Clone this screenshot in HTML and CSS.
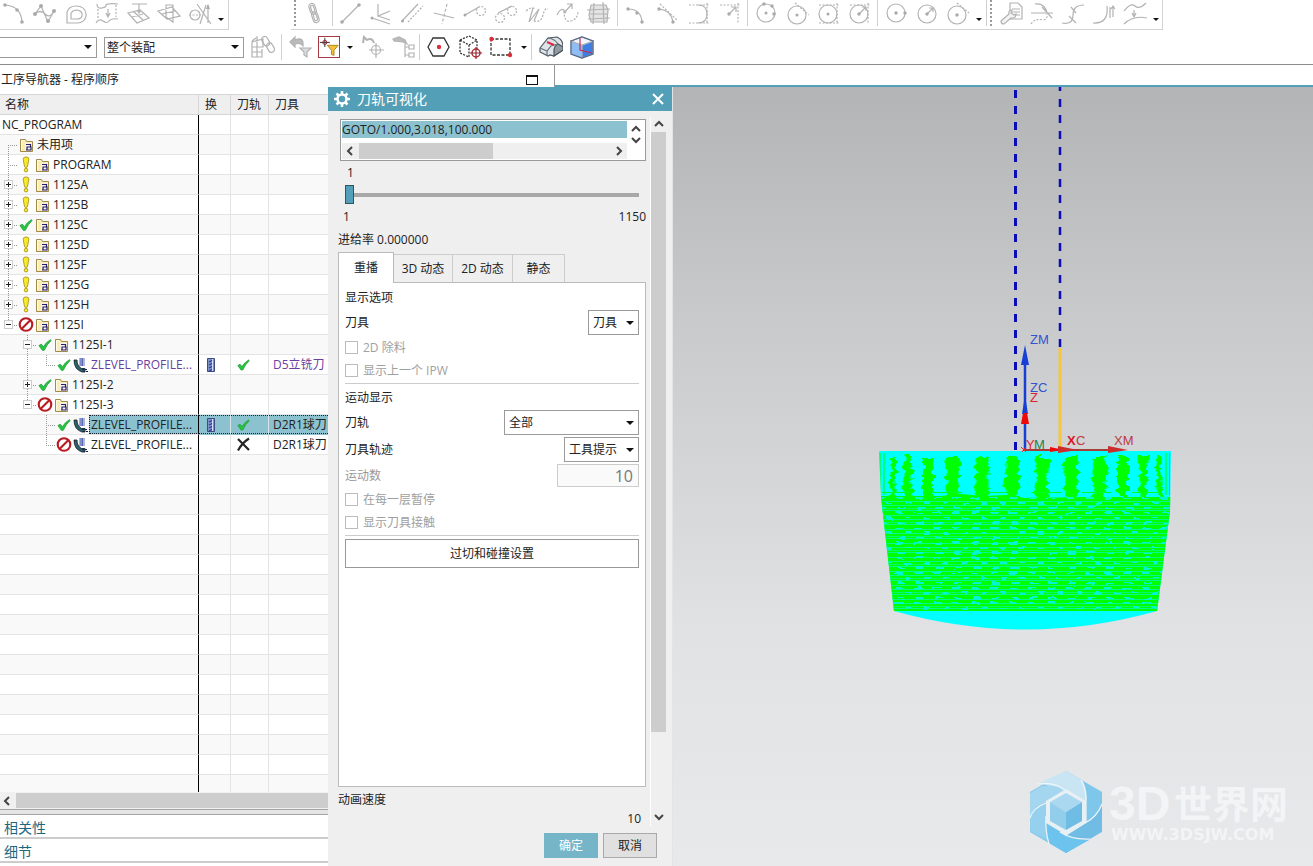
FILE: index.html
```html
<!DOCTYPE html>
<html lang="zh-CN">
<head>
<meta charset="utf-8">
<title>刀轨可视化</title>
<link rel="stylesheet" href="styles.css">
</head>
<body>
<svg class="defs" aria-hidden="true">
  <symbol id="folder" viewBox="0 0 15 15"><path d="M1.500 13.500V1.500h5l1 2h6v10z" fill="#f8eeb4" stroke="#a08b4c"/><path d="M2.500 12.500V2.500h3" stroke="#fffde8" fill="none"/><path d="M6 5h7v8H6z" fill="#f6f3e6"/><path d="M7 6.500h4.500v2.500H7.500M8 9v2.500M8 9h4v3H7" stroke="#26206f" stroke-width="1.200" fill="none"/></symbol>
  <symbol id="warn" viewBox="0 0 15 18"><path d="M4.500 3.500Q4.500 1 7.500 1t3 2.500L9 11.500Q7.500 13 6 11.500z" fill="#f8ea28" stroke="#ab9a27"/><circle cx="7.500" cy="15" r="1.900" fill="#f8ea28" stroke="#ab9a27"/></symbol>
  <symbol id="ok" viewBox="0 0 15 15"><path d="M1.800 8.500L4 7.200l2 2.300Q9 5 12.500 3l.8.700Q9.500 7 6.800 13H5z" fill="#25c53e" stroke="#1b9a34" stroke-width=".7"/></symbol>
  <symbol id="ban" viewBox="0 0 15 15"><circle cx="7.500" cy="7.500" r="5.900" fill="#fff" stroke="#b81c22" stroke-width="2"/><path d="M3.500 11.500l8-8" stroke="#b81c22" stroke-width="2"/></symbol>
  <symbol id="mill" viewBox="0 0 15 15"><path d="M6.500 0h5v8h-5z" fill="#5a68b0"/><path d="M8 0v8M10.500 0v8" stroke="#a9b5e6"/><path d="M1 2h3q0 6 4.500 8.500H12V14H9Q1 11.500 1 2z" fill="#2d6266" stroke="#111b2c" stroke-width=".8"/><path d="M9 11.500h6M10 13.500h5" stroke="#16204a" stroke-dasharray="2 1"/></symbol>
  <symbol id="tool" viewBox="0 0 8 14"><path d="M.5.500h7v13h-7z" fill="#7e93ce" stroke="#3d4a84"/><path d="M2 4l4-2M2 7l4-2M2 10l4-2M2 13l4-2" stroke="#2d3a7d" stroke-width="1.300"/><path d="M5.500 1v12" stroke="#d0dbf5"/></symbol>
  <symbol id="cross" viewBox="0 0 15 15"><path d="M2 2l11 11M13 1.500Q6 6 2 13.500" stroke="#252525" stroke-width="2.200" fill="none"/></symbol>
</svg>

<header class="toolbars">
  <div class="bar bar-top">
    <div class="group first">
      <button class="ic" aria-label="圆弧"><svg viewBox="0 0 24 24"><path d="M3 4Q19 5 20 21"/><g class="dot"><circle cx="3" cy="4" r="1.800"/><circle cx="15" cy="9" r="1.800"/><circle cx="20" cy="21" r="1.800"/></g></svg></button>
      <button class="ic" aria-label="样条"><svg viewBox="0 0 24 24"><path d="M2 13l6-8 7 16 6-11M2 13q5-5 10 0t9-3"/><g class="dot"><circle cx="2" cy="13" r="2"/><circle cx="8" cy="5" r="2"/><circle cx="15" cy="20" r="2"/><circle cx="21" cy="10" r="2"/></g></svg></button>
      <button class="ic" aria-label="偏置曲线"><svg viewBox="0 0 24 24"><path d="M3 22V11Q5 5 12 5q9 0 10 8v2q-1 6-8 7zM7 18v-6q2-3 6-3 6 1 5 6-1 3-5 3z"/></svg></button>
      <button class="ic" aria-label="桥接曲线"><svg viewBox="0 0 24 24"><path d="M2 3q0 5 5 4t4-3q2-2 12-1M1 22q3-5 7-2t6 0 9-2"/><path d="M3 8v9M21 4v12" class="dash"/><path d="M13 8v7m-2-3l2 4 2-4"/></svg></button>
      <button class="ic" aria-label="投影曲线"><svg viewBox="0 0 24 24"><path d="M2 12l12-3 9 8-12 5zM6 3h15M13 3v8m-2-2l2 3 2-3M6 16l11-3M8 11l9 8"/></svg></button>
      <button class="ic" aria-label="相交曲线"><svg viewBox="0 0 24 24"><path d="M1 10l14-4 8 9-13 3zM9 4h7v17l-7-5zM5 13l13-3M16 4v17"/></svg></button>
      <button class="ic" aria-label="截面曲线"><svg viewBox="0 0 24 24"><circle cx="7" cy="14" r="5"/><path d="M1 14h12" class="dash"/><path d="M9 3l14 20M20 22V4M12 23L18 4"/><path d="M18 8l2-5 2 5z" class="dot"/></svg></button>
      <button class="more" aria-label="更多曲线"></button>
    </div>
    <div class="group second">
      <i class="grip"></i>
      <button class="ic" aria-label="链接"><svg viewBox="0 0 24 24"><g transform="rotate(-18 12 12)"><rect x="9" y="2" width="6" height="11" rx="3"/><rect x="10.500" y="4" width="3" height="7" rx="1.500"/><rect x="9" y="11" width="6" height="11" rx="3"/><rect x="10.500" y="13" width="3" height="7" rx="1.500"/></g></svg></button>
      <i class="sep"></i>
      <button class="ic" aria-label="直线"><svg viewBox="0 0 24 24"><path d="M3 21L20 4"/><g class="dot"><circle cx="3" cy="21" r="1.800"/><circle cx="20" cy="4" r="1.800"/></g></svg></button>
      <button class="ic" aria-label="直线成角度"><svg viewBox="0 0 24 24"><path d="M8 3v12l12-5M2 17l18 6M8 15l12 4"/><circle cx="2" cy="17" r="1.500" class="dot"/></svg></button>
      <button class="ic" aria-label="平行线"><svg viewBox="0 0 24 24"><path d="M1 20L17 3"/><path d="M7 21L22 5" class="dash"/><circle cx="1.500" cy="20" r="1.500" class="dot"/></svg></button>
      <button class="ic" aria-label="垂直线"><svg viewBox="0 0 24 24"><path d="M2 12l20 5"/><path d="M15 3l-5 20" class="dash2"/></svg></button>
      <button class="ic" aria-label="相切线"><svg viewBox="0 0 24 24"><path d="M2 14l14-8"/><circle cx="18" cy="10" r="4.500" class="dash"/><circle cx="2" cy="14" r="1.500" class="dot"/></svg></button>
      <button class="ic" aria-label="双相切线"><svg viewBox="0 0 24 24"><path d="M4 12l14-7"/><circle cx="6" cy="17" r="4.500" class="dash"/><circle cx="18" cy="10" r="4.500" class="dash"/></svg></button>
      <button class="ic" aria-label="曲线连接"><svg viewBox="0 0 24 24"><path d="M4 21l4-14M9 20l5-12M4 21l10-13"/><path d="M1 10q6-5 9-2M9 20q7 2 9-6t5-6" class="dash"/></svg></button>
      <button class="ic" aria-label="艺术样条"><svg viewBox="0 0 24 24"><path d="M1 14q5-10 9-2M8 12l8-9m-5 0h5v5"/><path d="M8 10q0 12 7 10t7-10" class="dash"/></svg></button>
      <button class="ic" aria-label="曲线网格"><svg viewBox="0 0 24 24"><path d="M4 4h15l2 5-1 12H4L2 14z" fill="#e4e4e4"/><path d="M7 2l-1 21M16 1l1 22M0 9l23-1M1 18l22-1M3 13h18"/></svg></button>
      <i class="sep"></i>
      <button class="ic" aria-label="三点圆弧"><svg viewBox="0 0 24 24"><path d="M4 8q13 0 14 13"/><g class="dot"><circle cx="4" cy="8" r="1.700"/><circle cx="13" cy="12" r="1.700"/><circle cx="18" cy="21" r="1.700"/></g></svg></button>
      <button class="ic" aria-label="相切圆弧"><svg viewBox="0 0 24 24"><path d="M4 8q12 1 14 13"/><path d="M5 3l17 16" class="dash"/><g class="dot"><circle cx="4" cy="8" r="1.700"/><circle cx="18" cy="21" r="1.700"/></g></svg></button>
      <button class="ic" aria-label="倒圆角"><svg viewBox="0 0 24 24"><path d="M12 4q9 0 9 9t-9 9"/><path d="M3 4h20M3 22h20M21 2v21" class="dash"/></svg></button>
      <button class="ic" aria-label="半径圆弧"><svg viewBox="0 0 24 24"><path d="M12 13l7-7m-5 0h5v5"/><path d="M3 4h20M21 2v21" class="dash"/><circle cx="12" cy="13" r="1.700" class="dot"/></svg></button>
      <i class="sep"></i>
      <button class="ic" aria-label="三点圆"><svg viewBox="0 0 24 24"><circle cx="12" cy="12" r="9"/><g class="dot"><circle cx="12" cy="12" r="1.500"/><circle cx="20" cy="13" r="1.700"/><circle cx="10" cy="3" r="1.700"/><circle cx="18" cy="5" r="1.700"/></g></svg></button>
      <button class="ic" aria-label="相切圆"><svg viewBox="0 0 24 24"><circle cx="12" cy="14" r="9"/><path d="M10 2l14 12" class="dash"/><circle cx="12" cy="14" r="1.500" class="dot"/></svg></button>
      <button class="ic" aria-label="边界圆"><svg viewBox="0 0 24 24"><circle cx="12" cy="13" r="9"/><path d="M3 4h20M3 22h20M21 2v21" class="dash"/><circle cx="12" cy="13" r="1.500" class="dot"/></svg></button>
      <button class="ic" aria-label="边界半径圆"><svg viewBox="0 0 24 24"><circle cx="12" cy="13" r="9"/><path d="M12 13l7-7m-4 0h4v4"/><path d="M3 4h20M21 2v21" class="dash"/><circle cx="12" cy="13" r="1.700" class="dot"/></svg></button>
      <i class="sep"></i>
      <button class="ic" aria-label="中心圆"><svg viewBox="0 0 24 24"><circle cx="12" cy="12" r="9"/><g class="dot"><circle cx="12" cy="12" r="1.700"/><circle cx="21" cy="12" r="1.700"/></g></svg></button>
      <button class="ic" aria-label="半径圆"><svg viewBox="0 0 24 24"><circle cx="12" cy="13" r="9"/><path d="M12 13l6-6m-4 0h4v4"/><circle cx="12" cy="13" r="1.700" class="dot"/></svg></button>
      <button class="ic" aria-label="中心相切圆"><svg viewBox="0 0 24 24"><circle cx="11" cy="14" r="9"/><path d="M11 2l12 10" class="dash"/><circle cx="11" cy="14" r="1.700" class="dot"/></svg></button>
      <button class="more" aria-label="更多圆"></button>
      <i class="grip end"></i>
      <button class="ic" aria-label="编辑参数"><svg viewBox="0 0 24 24"><path d="M11 2h8l4 4v12H11zM13 8h8M13 11h8M13 14h8"/><path d="M2 20l8-7q-1-4 3-4l-1 3 3 2 2-1q0 5-5 4l-7 6q-3 0-3-3z" fill="#f4f4f4"/></svg></button>
      <button class="ic" aria-label="修剪曲线"><svg viewBox="0 0 24 24"><path d="M1 12h22M5 3q10-1 12 9M12 6l10 11"/><path d="M1 23q4-6 12-4 5-1 4-6" class="dash"/></svg></button>
      <button class="ic" aria-label="修剪拐角"><svg viewBox="0 0 24 24"><path d="M1 22q11 2 11-8T23 4M10 6l5 6M8 15l7 7"/></svg></button>
      <button class="ic" aria-label="曲线长度"><svg viewBox="0 0 24 24"><path d="M1 22q16 1 14-17M18 6v11M21 5v11m-2-8l2-3 2 3"/></svg></button>
      <button class="ic" aria-label="光顺曲线"><svg viewBox="0 0 24 24"><path d="M1 10q7-9 11-5t11-3M1 23q9-9 23-6M11 9v6m-2-3l2 4 2-4"/></svg></button>
      <button class="more" aria-label="更多编辑"></button>
    </div>
  </div>
  <div class="bar bar-bottom">
    <span class="pick filter"><select aria-label="类型过滤器"><option></option></select></span>
    <span class="pick scope"><select aria-label="选择范围"><option>整个装配</option></select></span>
    <button class="ic wide" aria-label="装配链接"><svg viewBox="0 0 24 24"><path d="M1 7l11-3v8H1zM1 12v10h10v-8M6 1v21M1 17h10M1 6l4-3"/><g transform="rotate(-30 18 10)"><rect x="14" y="0" width="6" height="10" rx="3"/><rect x="15" y="8" width="6" height="10" rx="3"/></g></svg></button>
    <i class="sep"></i>
    <button class="ic" aria-label="重置过滤器"><svg viewBox="0 0 24 24"><path d="M1 7l5-5v3q9-4 8 6-3-4-8-2v3z" fill="#bbb"/><path d="M11 13h11l-4 4v5l-3-2v-3z" fill="#ddd"/></svg></button>
    <button class="ic boxed" aria-label="常规选择过滤器"><svg viewBox="0 0 24 24"><path d="M7 1v11M1 6.500h12" stroke="#333"/><circle cx="7" cy="6.500" r="2.500" stroke="#a12a38"/><path d="M10 10h13l-5 6v6l-3-1v-5z" fill="#f0c23c" stroke="#b68a1d"/></svg></button>
    <button class="more" aria-label="过滤器选项"></button>
    <button class="ic" aria-label="捕捉点"><svg viewBox="0 0 24 24"><path d="M2 8l1-6 3 3q5-3 7 3" stroke-width="2"/><circle cx="15" cy="15" r="4.500"/><path d="M15 8v15M8 15h15"/></svg></button>
    <button class="ic" aria-label="选择父项"><svg viewBox="0 0 24 24"><path d="M1 4l6-2 6 3 2 4-4-2-9-1z" fill="#bbb"/><path d="M13 9v13M13 12h4M13 20h4M17 10h5v4h-5zM17 18h5v4h-5z"/></svg></button>
    <i class="sep"></i>
    <button class="ic" aria-label="点"><svg viewBox="0 0 24 24"><path d="M1 12L6 3h11l5 9-5 9H6z" stroke="#333" stroke-width="1.300"/><circle cx="12" cy="12" r="2.200" fill="#d7303a" stroke="none"/></svg></button>
    <button class="ic" aria-label="旋转点"><svg viewBox="0 0 24 24"><path d="M2 5l9-4 8 4v9M2 5v13l9 4V10L2 5M11 10l8-5" stroke="#333" stroke-width="1.300" stroke-dasharray="2 1.300"/><circle cx="18" cy="18" r="4" stroke="#b02d35" stroke-width="1.500"/><path d="M18 12v12M12 18h12" stroke="#8f2c31"/></svg></button>
    <button class="ic" aria-label="矩形选择"><svg viewBox="0 0 24 24"><path d="M2 4h19v16H2z" stroke="#333" stroke-width="1.300" stroke-dasharray="3 1.500"/><circle cx="2.500" cy="4" r="2.200" fill="#d7303a" stroke="none"/><circle cx="21" cy="20" r="2.200" fill="#d7303a" stroke="none"/></svg></button>
    <button class="more" aria-label="选择方式"></button>
    <i class="sep"></i>
    <button class="ic" aria-label="着色"><svg viewBox="0 0 24 24"><path d="M1 13L9 3l9-1q6 3 6 9v4l-9 6-4-1-2 1-8-4z" fill="#dfe4e8" stroke="#4d575e"/><path d="M15 21v-5q0-5 4-7l5 3v3z" fill="#8f9aa1" stroke="#4d575e"/><path d="M1 13l7 3 4-5 7-2M8 16v5M9 3q7 1 10 6" stroke="#66737c"/><path d="M8 7l7 3" stroke="#e22b42" stroke-width="2"/></svg></button>
    <button class="ic" aria-label="剖切视图"><svg viewBox="0 0 24 24"><path d="M1 6l11 4v13L1 19z" fill="#8fbdf6"/><path d="M12 10l11-4v13l-11 4z" fill="#3d7fe4"/><path d="M1 6l11-4 11 4-11 4z" fill="#f2f7ff"/><path d="M1 6l11-4 11 4v13l-11 4L1 19z" stroke="#53688c"/><path d="M10 3v12l12 3" stroke="#c62e55"/></svg></button>
  </div>
</header>

<main class="work">
  <aside class="nav">
    <h1 class="nav-title">工序导航器 - 程序顺序<button class="dock" aria-label="停靠"></button></h1>
    <div class="tree-scroll">
      <table class="tree">
        <colgroup><col class="c-name"><col class="c-change"><col class="c-path"><col></colgroup>
        <thead><tr><th>名称</th><th>换</th><th>刀轨</th><th>刀具</th></tr></thead>
        <tbody>
          <tr><td><div class="node root"><span>NC_PROGRAM</span></div></td><td></td><td></td><td></td></tr>
          <tr><td><div class="node"><i class="slot down"></i><svg class="fo"><use href="#folder"/></svg><span>未用项</span></div></td><td></td><td></td><td></td></tr>
          <tr><td><div class="node"><i class="slot mid"></i><svg class="st"><use href="#warn"/></svg><svg class="fo"><use href="#folder"/></svg><span>PROGRAM</span></div></td><td></td><td></td><td></td></tr>
          <tr><td><div class="node"><i class="slot mid"><button class="exp plus" aria-label="展开"></button></i><svg class="st"><use href="#warn"/></svg><svg class="fo"><use href="#folder"/></svg><span>1125A</span></div></td><td></td><td></td><td></td></tr>
          <tr><td><div class="node"><i class="slot mid"><button class="exp plus" aria-label="展开"></button></i><svg class="st"><use href="#warn"/></svg><svg class="fo"><use href="#folder"/></svg><span>1125B</span></div></td><td></td><td></td><td></td></tr>
          <tr><td><div class="node"><i class="slot mid"><button class="exp plus" aria-label="展开"></button></i><svg class="st"><use href="#ok"/></svg><svg class="fo"><use href="#folder"/></svg><span>1125C</span></div></td><td></td><td></td><td></td></tr>
          <tr><td><div class="node"><i class="slot mid"><button class="exp plus" aria-label="展开"></button></i><svg class="st"><use href="#warn"/></svg><svg class="fo"><use href="#folder"/></svg><span>1125D</span></div></td><td></td><td></td><td></td></tr>
          <tr><td><div class="node"><i class="slot mid"><button class="exp plus" aria-label="展开"></button></i><svg class="st"><use href="#warn"/></svg><svg class="fo"><use href="#folder"/></svg><span>1125F</span></div></td><td></td><td></td><td></td></tr>
          <tr><td><div class="node"><i class="slot mid"><button class="exp plus" aria-label="展开"></button></i><svg class="st"><use href="#warn"/></svg><svg class="fo"><use href="#folder"/></svg><span>1125G</span></div></td><td></td><td></td><td></td></tr>
          <tr><td><div class="node"><i class="slot mid"><button class="exp plus" aria-label="展开"></button></i><svg class="st"><use href="#warn"/></svg><svg class="fo"><use href="#folder"/></svg><span>1125H</span></div></td><td></td><td></td><td></td></tr>
          <tr><td><div class="node"><i class="slot last"><button class="exp" aria-label="折叠"></button></i><svg class="st"><use href="#ban"/></svg><svg class="fo"><use href="#folder"/></svg><span>1125I</span></div></td><td></td><td></td><td></td></tr>
          <tr><td><div class="node l2"><i class="slot mid"><button class="exp" aria-label="折叠"></button></i><svg class="st"><use href="#ok"/></svg><svg class="fo"><use href="#folder"/></svg><span>1125I-1</span></div></td><td></td><td></td><td></td></tr>
          <tr class="op"><td><div class="node l2"><i class="slot through"></i><i class="slot last"></i><svg class="st"><use href="#ok"/></svg><svg class="fo"><use href="#mill"/></svg><span>ZLEVEL_PROFILE...</span></div></td><td><svg class="tl"><use href="#tool"/></svg></td><td><svg class="mk"><use href="#ok"/></svg></td><td>D5立铣刀</td></tr>
          <tr><td><div class="node l2"><i class="slot mid"><button class="exp plus" aria-label="展开"></button></i><svg class="st"><use href="#ok"/></svg><svg class="fo"><use href="#folder"/></svg><span>1125I-2</span></div></td><td></td><td></td><td></td></tr>
          <tr><td><div class="node l2"><i class="slot last"><button class="exp" aria-label="折叠"></button></i><svg class="st"><use href="#ban"/></svg><svg class="fo"><use href="#folder"/></svg><span>1125I-3</span></div></td><td></td><td></td><td></td></tr>
          <tr class="picked"><td><div class="node l3"><i class="slot mid"></i><svg class="st"><use href="#ok"/></svg><svg class="fo"><use href="#mill"/></svg><span>ZLEVEL_PROFILE...</span></div></td><td><svg class="tl"><use href="#tool"/></svg></td><td><svg class="mk"><use href="#ok"/></svg></td><td>D2R1球刀</td></tr>
          <tr><td><div class="node l3"><i class="slot last"></i><svg class="st"><use href="#ban"/></svg><svg class="fo"><use href="#mill"/></svg><span>ZLEVEL_PROFILE...</span></div></td><td></td><td><svg class="mk"><use href="#cross"/></svg></td><td>D2R1球刀</td></tr>
          <tr><td></td><td></td><td></td><td></td></tr><tr><td></td><td></td><td></td><td></td></tr>
          <tr><td></td><td></td><td></td><td></td></tr><tr><td></td><td></td><td></td><td></td></tr>
          <tr><td></td><td></td><td></td><td></td></tr><tr><td></td><td></td><td></td><td></td></tr>
          <tr><td></td><td></td><td></td><td></td></tr><tr><td></td><td></td><td></td><td></td></tr>
          <tr><td></td><td></td><td></td><td></td></tr><tr><td></td><td></td><td></td><td></td></tr>
          <tr><td></td><td></td><td></td><td></td></tr><tr><td></td><td></td><td></td><td></td></tr>
          <tr><td></td><td></td><td></td><td></td></tr><tr><td></td><td></td><td></td><td></td></tr>
          <tr><td></td><td></td><td></td><td></td></tr><tr><td></td><td></td><td></td><td></td></tr>
          <tr><td></td><td></td><td></td><td></td></tr>
        </tbody>
      </table>
    </div>
    <div class="hbar"><svg class="chev" viewBox="0 0 10 10"><path d="M7 1L3 5l4 4"/></svg><i class="thumb"></i></div>
    <div class="splitter"></div>
    <button class="fold">相关性</button>
    <button class="fold">细节</button>
  </aside>

  <section class="view">
    <svg class="scene" viewBox="555 87 758 779" preserveAspectRatio="xMaxYMin meet" role="img" aria-label="零件与刀轨">
      <defs>
        <filter id="rough" x="-5%" y="-5%" width="110%" height="110%"><feTurbulence type="fractalNoise" baseFrequency="0.09 0.2" numOctaves="2" seed="4"/><feDisplacementMap in="SourceGraphic" scale="11" xChannelSelector="R" yChannelSelector="A"/></filter>
        <filter id="weave" x="0" y="0" width="100%" height="100%"><feTurbulence type="fractalNoise" baseFrequency="0.07 0.3" numOctaves="2" seed="9"/><feDisplacementMap in="SourceGraphic" scale="5" xChannelSelector="R" yChannelSelector="A"/></filter>
        <pattern id="lines" width="40" height="14" patternUnits="userSpaceOnUse"><path d="M0 1.500h40M0 6.500h40M0 11.500h40" stroke="#00fb8c"/><path d="M0 4.500h40" stroke="#00f8b4" stroke-width=".6"/></pattern>
        <pattern id="dashes" width="19" height="15" patternUnits="userSpaceOnUse"><path d="M2 3h8M12 8h6M4 13h8" stroke="#00f5d0" stroke-width="1.800"/></pattern>
        <clipPath id="body"><path d="M879 451h292l-1 60-13 100-263 0-13-114z"/></clipPath>
      </defs>
      <g stroke="#0b0bb8" fill="none" stroke-dasharray="8 8"><path d="M1015.500 90v361" stroke-width="3"/><path d="M1060 83v265" stroke-width="2.500"/></g>
      <path d="M1060 348v102" stroke="#f7c63c" stroke-width="3"/>
      <path d="M879 451h292l-1 60-13 100Q1026 648 894 611l-13-114z" fill="#00ffff"/>
      <g clip-path="url(#body)">
        <path d="M880 453v42M884 453v42M1166 453v42M1169.500 453v42" stroke="#00ff00"/>
        <g filter="url(#rough)" stroke="#00ff00" fill="none"><path d="M893 456v42M1159 456v42" stroke-width="5"/><path d="M908 456v42M1143 456v42" stroke-width="7"/><path d="M928 456v42M1123 456v42" stroke-width="10"/><path d="M953 456v42M982 456v42M1012 456v42M1042 456v42M1071 456v42M1099 456v42" stroke-width="13"/></g>
        <path d="M879 496h62l20-2 22 2 22-1 20 3 60-1h86v114H879z" fill="#00ff00"/>
        <path d="M879 500h292v111H879z" fill="url(#lines)"/>
        <g filter="url(#weave)"><path d="M875 497h300v113H875z" fill="url(#dashes)"/></g>
        <path d="M882 492.500h285" stroke="#00ff20" stroke-dasharray="29 21"/>
      </g>
      <g fill="none"><path d="M1025 450v-86" stroke="#173fd6" stroke-width="2.500"/><path d="M1023 450h88" stroke="#a83e36" stroke-width="2"/></g>
      <path d="M1025 345l4 20h-8zM1025 395l3 19h-6z" fill="#173fd6"/>
      <path d="M1023 413h4l2 11h-8zM1050 447l14 3-14 2z" fill="#ed0909"/>
      <path d="M1108 446l20 4-20 3zM1058 446l20 4-20 3z" fill="#c92d2d"/>
      <path d="M1021 447l5 5M1026 447l-4 5" stroke="#e22"/>
      <g class="axis"><text x="1030" y="344" fill="#3255cf">ZM</text><text x="1030" y="392" fill="#3255cf">ZC</text><text x="1030" y="402" fill="#df2032">Z</text><text x="1026" y="449" fill="#e12737">Y</text><text x="1034" y="449" fill="#22834c">M</text><text x="1067" y="445" fill="#df1625" class="strong">X</text><text x="1076" y="445" fill="#be3a42">C</text><text x="1114" y="445" fill="#be3a42">XM</text></g>
      <g class="brand">
        <path d="M1066 771l36 21v40l-36 21-36-21v-40z" fill="#7ec7eb"/>
        <path d="M1066 771l17 10q5 10 3 22l-20-12-20-6-9-1z" fill="#c9e4f2"/>
        <path d="M1030 793l12-7q13-2 24 5l-20 12q-14 8-16 16z" fill="#a5d6f0"/>
        <path d="M1030 818q4-10 17-15v20q0 13 5 20l-22-12z" fill="#96d0ef"/>
        <path d="M1066 853l-17-10q-3-11-3-20l20 12 20 4 3 1z" fill="#6cc3ed"/>
        <path d="M1102 806v25l-14 9q-12 0-22-5l20-12q12-6 16-17z" fill="#70bce4"/>
        <path d="M1037 784q18-3 29 7M1081 780q6 11 5 25v18M1102 804q-5 13-17 19l-19 12M1090 839q-18 1-30-7M1049 844q-4-14-3-28M1030 818q3-10 16-15l20-12" fill="none" stroke="#eef5f8" stroke-width="1.200"/>
        <path d="M1066 789l20 12v22l-20 12-20-12v-22z" fill="#e8f0f4"/><path d="M1066 793l16 9-16 10-16-10z" fill="#a9d8f0"/><path d="M1050 802l16 10v18l-16-9z" fill="#92cdec"/><path d="M1082 802l-16 10v18l16-9z" fill="#6fbce5"/>
        <text x="1109" y="820" class="brand-lat">3D</text><text x="1174" y="818" class="brand-cjk">世界网</text><text x="1111" y="840" class="brand-url">WWW.3DSJW.COM</text>
      </g>
    </svg>
  </section>

  <form class="dialog" role="dialog" aria-label="刀轨可视化">
    <header class="caption">
      <svg class="gear" viewBox="0 0 16 16"><circle cx="8" cy="8" r="4.500" fill="none" stroke="#fff" stroke-width="2.500"/><path d="M8 0v3M8 13v3M0 8h3M13 8h3M2.500 2.500l2 2M11.500 11.500l2 2M2.500 13.500l2-2M11.500 4.500l2-2" stroke="#fff" stroke-width="2.500"/></svg>
      <h2>刀轨可视化</h2>
      <button type="button" class="close" aria-label="关闭"><svg viewBox="0 0 12 12"><path d="M1 1l10 10M11 1L1 11" stroke="#fff" stroke-width="2"/></svg></button>
    </header>
    <div class="dialog-body">
      <div class="content">
        <div class="listbox">
          <div class="list-main"><div class="line">GOTO/1.000,3.018,100.000</div><div class="list-h"><svg class="chev" viewBox="0 0 10 10"><path d="M7 1L3 5l4 4"/></svg><i></i><svg class="chev" viewBox="0 0 10 10"><path d="M3 1l4 4-4 4"/></svg></div></div>
          <div class="list-v"><svg class="chev" viewBox="0 0 10 10"><path d="M1 7l4-4 4 4"/></svg><svg class="chev" viewBox="0 0 10 10"><path d="M1 3l4 4 4-4"/></svg></div>
        </div>
        <label class="now" for="step">1</label>
        <input id="step" class="range" type="range" min="1" max="1150" value="1">
        <div class="ends"><span>1</span><span>1150</span></div>
        <div class="feed">进给率 0.000000</div>
        <div class="tabs" role="tablist"><button type="button" role="tab" class="on">重播</button><button type="button" role="tab">3D 动态</button><button type="button" role="tab">2D 动态</button><button type="button" role="tab">静态</button></div>
        <div class="panel">
          <h3>显示选项</h3>
          <div class="row"><label for="tool-sel">刀具</label><span class="pick"><select id="tool-sel"><option>刀具</option></select></span></div>
          <div class="checks"><label><input type="checkbox" disabled>2D 除料</label><label><input type="checkbox" disabled>显示上一个 IPW</label></div>
          <hr>
          <h3>运动显示</h3>
          <div class="row"><label for="path-sel">刀轨</label><span class="pick long"><select id="path-sel"><option>全部</option></select></span></div>
          <div class="row"><label for="trace-sel">刀具轨迹</label><span class="pick mid"><select id="trace-sel"><option>工具提示</option></select></span></div>
          <div class="row off"><label for="count">运动数</label><input id="count" type="text" value="10" disabled></div>
          <div class="checks"><label><input type="checkbox" disabled>在每一层暂停</label><label><input type="checkbox" disabled>显示刀具接触</label></div>
          <hr>
          <button type="button" class="settings">过切和碰撞设置</button>
        </div>
        <div class="speed">动画速度</div>
        <div class="speed-max">10</div>
      </div>
      <div class="vbar"><svg class="chev" viewBox="0 0 10 10"><path d="M1 7l4-4 4 4"/></svg><i></i><svg class="chev" viewBox="0 0 10 10"><path d="M1 3l4 4 4-4"/></svg></div>
    </div>
    <footer class="actions"><button type="button" class="primary">确定</button><button type="button">取消</button></footer>
  </form>
</main>
</body>
</html>
```

FILE: styles.css
```css
* { box-sizing: border-box; }
body {
  margin: 0;
  height: 100vh;
  display: flex;
  flex-direction: column;
  overflow: hidden;
  background: #fff;
  color: #222;
  font: 12px/16px "Open Sans", "Noto Sans CJK SC", sans-serif;
}
button, select, input { font: inherit; color: inherit; border-radius: 0; }
button { padding: 0; border: 0; background: none; }
h1, h2, h3 { margin: 0; font-size: 12px; font-weight: 400; }
.defs { position: absolute; width: 0; height: 0; }

/* toolbars */
.toolbars { flex: none; border-bottom: 1px solid #8d8d8d; }
.bar { display: flex; align-items: center; }
.bar-top { height: 30px; gap: 62px; }
.group { display: flex; align-items: center; height: 30px; padding-bottom: 4px; border: solid #d4d4d4; border-width: 0 1px 1px 0; }
.group.first { width: 229px; }
.group.first .ic:first-child { margin-left: -2px; }
.bar-bottom { height: 34px; }
.ic { flex: none; display: grid; place-items: center; width: 31px; height: 26px; }
.ic svg { width: 24px; height: 24px; fill: none; stroke: #b2b2b2; stroke-width: 1.2; }
.ic .dot { fill: #aaa; stroke: none; }
.ic .dash { stroke-dasharray: 2 1.5; }
.ic .dash2 { stroke-dasharray: 3 2; }
.ic.wide { width: 37px; }
.ic.boxed { width: 22px; height: 22px; margin: 0 2px; border: 1px solid #a83843; }
.ic.boxed svg { width: 20px; height: 20px; }
.more { flex: none; width: 12px; height: 24px; display: grid; place-items: center; }
.more::after { content: ""; border: 3px solid transparent; border-top-color: #111; border-bottom: 0; }
.bar-top .more { padding-top: 14px; }
.bar-bottom .more { width: 15px; }
.sep { flex: none; width: 1px; height: 26px; margin: 0 2px 0 3px; background: #d0d0d0; }
.bar-bottom .sep { margin: 0 3px 0 0; }
.grip { flex: none; width: 7px; height: 26px; background: repeating-linear-gradient(#999 0 2px, #fff 2px 4px) 3px 0 / 2px 100% no-repeat; }
.grip.end { width: 9px; margin-left: 1px; border-left: 1px solid #d0d0d0; }
.pick { position: relative; display: block; }
.pick select { display: block; width: 100%; height: 25px; padding: 0 4px; border: 1px solid #9a9a9a; background: #fff; appearance: none; outline: 0; }
.pick::after { content: ""; position: absolute; right: 5px; top: 50%; margin-top: -2px; border: 4px solid transparent; border-top-color: #111; border-bottom: 0; pointer-events: none; }
.bar .pick select { height: 21px; padding: 1px 2px 0; }
.filter { width: 98px; margin-left: -1px; }
.scope { width: 140px; margin-left: 7px; }

/* navigator */
.work { flex: 1; min-height: 0; display: flex; position: relative; }
.nav { flex: none; width: 555px; display: flex; flex-direction: column; border-right: 1px solid #999; }
.nav-title { flex: none; display: flex; align-items: center; justify-content: space-between; height: 29px; padding: 0 16px 0 1px; }
.dock { width: 12px; height: 10px; border: 1px solid #111; border-top-width: 2px; }
.tree-scroll { flex: 1; min-height: 0; overflow: hidden; }
.tree { width: 100%; table-layout: fixed; border-collapse: separate; border-spacing: 0; }
.c-name { width: 199px; }
.c-change { width: 32px; }
.c-path { width: 38px; }
.tree th { height: 21px; padding: 0 6px; font-weight: 400; text-align: left; background: #efefef; border: solid #d6d6d6; border-width: 1px 1px 1px 0; }
.tree th:first-child { padding-left: 5px; }
.tree td { height: 20px; padding: 0 4px; border: solid #e4e4e4; border-width: 0 1px 1px 0; white-space: nowrap; }
.tree td:first-child { padding: 0; border-right-color: #000; }
.tree td:nth-child(2), .tree td:nth-child(3) { padding: 0 8px; }
.tree tbody tr:nth-child(even) { background: #f9f9f9; }
.tree .op { color: #6a3fa0; }
.tree svg { display: block; flex: none; }
.tl { width: 8px; height: 14px; }
.mk { width: 15px; height: 15px; margin-left: -3px; }
.node { display: flex; align-items: center; height: 19px; }
.node.l2 { padding-left: 19px; }
.node.l3 { padding-left: 38px; }
.node span { flex: 1; height: 19px; line-height: 20px; padding-left: 2px; }
.st { width: 16px; height: 17px; }
.fo { width: 15px; height: 15px; margin: 2px 1px 0; }
.slot { flex: none; display: flex; align-items: center; width: 18px; height: 20px; padding-left: 4px; background-repeat: no-repeat;
  background-image: repeating-linear-gradient(#999 0 1px, transparent 1px 2px), repeating-linear-gradient(90deg, #999 0 1px, transparent 1px 2px);
  background-position: 8px 0, 8px 10px; background-size: 1px 100%, 9px 1px; }
.slot.last { background-size: 1px 11px, 9px 1px; }
.slot.down { background-position: 8px 10px, 8px 10px; }
.slot.through { width: 19px; background-size: 1px 100%, 0 0; }
.exp { width: 9px; height: 9px; border: 1px solid #ccc; background: linear-gradient(#222, #222) center / 5px 1px no-repeat #fff; }
.exp.plus { background: linear-gradient(#222, #222) center / 5px 1px no-repeat, linear-gradient(#222, #222) center / 1px 5px no-repeat, #fff; }
.picked td:not(:first-child), .picked .node span {
  background: repeating-linear-gradient(90deg, #123 0 1px, transparent 1px 2px) 0 0 / 100% 1px no-repeat,
    repeating-linear-gradient(90deg, #123 0 1px, transparent 1px 2px) 0 100% / 100% 1px no-repeat, #8cc2d0; }
.picked .node span { border-left: 1px dotted #123; padding-left: 1px; }
.picked td:nth-child(2), .picked td:nth-child(3) { border-right-color: #d8e6ea; }
.picked td:not(:first-child) { border-bottom-color: transparent; }
.hbar { flex: none; display: flex; align-items: center; gap: 4px; height: 17px; padding: 1px 0 1px 2px; background: #f0f0f0; }
.thumb { flex: 1; height: 15px; background: #cdcdcd; }
.chev { flex: none; width: 10px; height: 10px; fill: none; stroke: #444; stroke-width: 2; }
.splitter { flex: none; height: 6px; background: #e4e4e4; border: solid #a4a4a4; border-width: 1px 0; }
.fold { flex: none; height: 24px; padding: 3px 0 0 4px; text-align: left; color: #1b6680; font-size: 14px; border-bottom: 2px solid #ccc; }
.fold:last-child { margin-bottom: 3px; }

/* graphics window */
.view { flex: 1; min-width: 0; margin-top: 20px; border-top: 2px solid #539fb7; background: linear-gradient(#b3b4b6, #cacbcd 32%, #e1e2e4 70%, #e7e9eb); }
.scene { display: block; width: 100%; height: 100%; }
.axis { font: 13px "Liberation Sans", sans-serif; }
.strong { font-weight: 700; }
.brand text { fill: #f3f4f5; font-weight: 700; }
.brand-lat { font: 48px "Liberation Sans", sans-serif; }
.brand-cjk { font: 38px "Noto Sans CJK SC", sans-serif; }
.brand .brand-url { font: 16px "DejaVu Sans", sans-serif; font-weight: 700; }

/* dialog */
.dialog { position: absolute; left: 328px; top: 22px; bottom: 0; width: 345px; display: flex; flex-direction: column; background: #efefef; border-right: 1px solid #e4e4e4; }
.caption { flex: none; display: flex; align-items: center; gap: 7px; height: 24px; padding: 0 8px 0 6px; background: #539fb7; color: #fff; }
.caption h2 { flex: 1; font-size: 14px; }
.gear { width: 16px; height: 16px; }
.close svg { display: block; width: 12px; height: 12px; }
.dialog-body { flex: 1; min-height: 0; display: flex; gap: 4px; padding: 6px 6px 0 10px; }
.content { flex: 1; min-width: 0; display: flex; flex-direction: column; padding-top: 2px; }
.listbox { flex: none; display: flex; height: 42px; margin-left: 2px; padding: 1px; border: 1px solid #999; background: #fff; }
.list-main { flex: 1; display: flex; flex-direction: column; justify-content: space-between; }
.line { height: 17px; line-height: 17px; background: #8cc2d0; }
.list-h { display: flex; align-items: center; gap: 4px; height: 16px; padding: 0 3px; background: #efefef; }
.list-h i { width: 134px; height: 16px; margin-right: auto; background: #cdcdcd; }
.list-v { width: 17px; display: flex; flex-direction: column; align-items: center; gap: 1px; padding-top: 3px; }
.now { height: 24px; padding: 4px 0 0 9px; }
.range { appearance: none; width: 294px; height: 19px; margin: 0 0 0 7px; background: linear-gradient(#a8a8a8, #a8a8a8) center / 100% 4px no-repeat; }
.range::-webkit-slider-thumb { appearance: none; width: 9px; height: 19px; border: 1px solid #2e5562; background: #539fb7; }
.ends { display: flex; justify-content: space-between; height: 24px; padding: 5px 0 0 5px; }
.feed { height: 25px; padding-top: 4px; }
.tabs { flex: none; display: flex; align-items: flex-end; height: 30px; position: relative; z-index: 1; margin-bottom: -1px; }
.tabs button { width: 60px; height: 29px; padding-top: 1px; border: 1px solid #ccc; border-left: 0; border-bottom-color: #bbb; }
.tabs .on { width: 56px; height: 31px; padding: 0; background: #fff; border: 1px solid #bbb; border-bottom: 0; }
.tabs button:nth-child(2) { width: 59px; }
.tabs button:last-child { width: 52px; }
.panel { flex: 1; display: flex; flex-direction: column; padding: 1px 6px; border: 1px solid #bbb; background: #fff; }
.panel h3 { height: 26px; padding-top: 6px; }
.row { display: flex; align-items: center; justify-content: space-between; height: 25px; }
.row + .row { margin-top: 2px; }
.row .pick { width: 51px; }
.row .pick.long { width: 135px; }
.row .pick.mid { width: 75px; }
.row.off { height: 23px; color: #999; }
.row input { width: 82px; height: 23px; padding: 0 5px; text-align: right; font-size: 16px; border: 1px solid #ccc; background: #fafafa; color: #777; }
.checks { margin: 1px 0; color: #a0a0a0; }
.checks label { display: flex; align-items: center; gap: 5px; height: 23px; }
.checks input { appearance: none; width: 13px; height: 13px; margin: 0; border: 1px solid #bbb; background: #fff; }
.panel hr { width: 100%; height: 1px; margin: 0; border: 0; background: #ccc; }
.settings { height: 29px; margin-top: 3px; border: 1px solid #999; background: #fff; }
.speed { height: 25px; padding-top: 5px; }
.speed-max { height: 14px; line-height: 14px; padding-right: 5px; text-align: right; }
.vbar { width: 16px; display: flex; flex-direction: column; align-items: center; border-left: 1px solid #fff; }
.vbar .chev:first-child { margin: 2px 0 3px; }
.vbar i { width: 15px; flex: 1; margin-bottom: 80px; background: #cdcdcd; }
.vbar .chev:last-child { margin-bottom: 4px; }
.actions { flex: none; display: flex; justify-content: flex-end; gap: 5px; height: 40px; padding: 7px 15px 8px 0; }
.actions button { width: 54px; height: 25px; border: 1px solid #aaa; background: #e0e0e0; }
.actions .primary { border-color: #76b4c7; background: #76b4c7; color: #fff; }
```
